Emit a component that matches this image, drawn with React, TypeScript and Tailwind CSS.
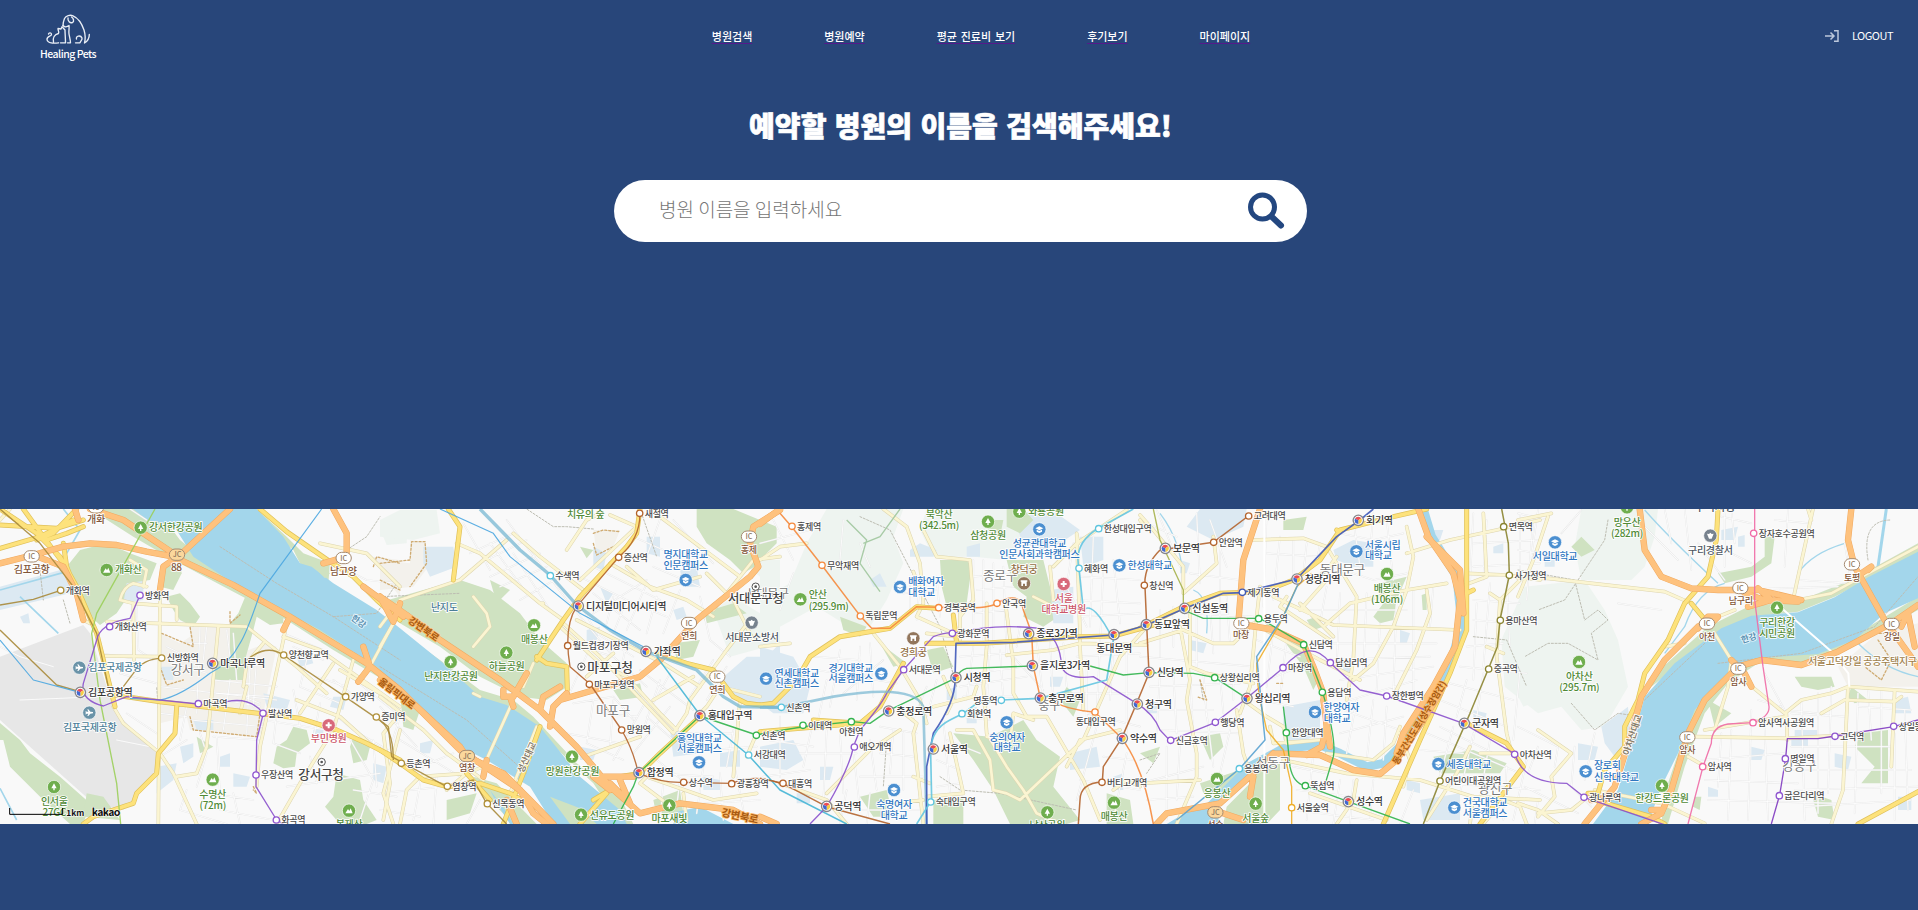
import React from "react";

type Tile = 0 | 1 | 2 | 3 | 4;
const ORIGIN = [0, 1140, 2280, 3420, 4554];

type Shape = [Tile, string];

const HILLS: Shape[] = [
  [2, "M200 27L430 27L400 110L430 190L380 300L330 380L250 370L170 320L60 380L0 400L0 300L90 250L140 130Z"],
  [2, "M500 27L780 27L800 120L740 180L640 170L520 170L480 90Z"],
  [1, "M1000 330L1060 290L1140 340L1140 230L1080 180L1200 180L1200 430L1050 470Z"],
  [3, "M1100 420L1160 400L1200 300L1200 600L1150 620L1110 540Z"],
  [4, "M190 27L420 27L410 110L380 200L340 240L190 240L170 140Z"],
  [4, "M20 260L200 240L260 330L300 420L330 560L260 680L190 690L130 620L60 640L-40 560L-50 420Z"],
  [0, "M1150 110L1180 80L1220 90L1220 130L1160 135Z"],
  [1, "M0 60L60 30L170 30L180 100L100 120L0 110Z"],
];

const PARKS: Shape[] = [
  [0, "M240 150L320 130L390 160L470 190L450 240L380 250L370 310L350 340L300 375L250 330L230 250L200 200Z"],
  [0, "M270 27L470 27L540 120L640 200L880 330L1200 530L1200 570L1000 450L860 360L690 270L520 180L400 110Z"],
  [0, "M500 290L540 280L570 310L600 350L580 380L540 360L520 330Z M740 280L800 290L850 340L850 370L810 375L770 350L760 390L735 480L730 540L640 540L640 490L690 470L690 370L715 340Z"],
  [0, "M480 200L540 190L545 220L520 270L480 260Z"],
  [0, "M-5 665L60 720L90 760L180 830L270 910L250 972L210 972L130 900L30 800L10 720L-5 720Z"],
  [0, "M880 680L920 690L930 730L890 760L885 800L850 805L820 790L830 740L860 720Z M1060 710L1110 740L1100 780L1060 790L1050 740Z M1010 820L1080 840L1090 900L1130 960L1100 972L1020 972L975 920L1000 890Z"],
  [0, "M770 27L860 110L910 160L990 190L985 250L1060 290L1190 380L1200 410L1090 340L1000 270L920 230L880 150L790 80Z"],
  [0, "M590 710L640 740L600 760Z M260 880L310 890L360 960L250 950Z"],
  [1, "M-10 310L130 270L240 240L330 270L420 340L480 420L560 490L562 560L500 600L420 590L300 530L180 440L60 370Z"],
  [1, "M60 395L180 480L300 570L400 600L460 650L590 790L720 890L760 972L720 972L640 850L470 690L300 590L100 440Z"],
  [1, "M60 580L120 630L100 690L70 680Z M330 240L390 270L350 310Z"],
  [1, "M950 27L1060 27L1140 60L1140 190L1090 220L1050 180L980 130L950 80Z M960 340L1060 310L1100 340L980 370Z M700 570L780 550L790 590L720 600Z M880 430L960 420L940 470L890 480Z"],
  [1, "M280 830L350 850L470 972L400 972L320 890Z M200 900L290 880L270 940L200 960Z M510 890L600 920L640 972L560 972Z M820 900L900 870L910 940L830 950Z M600 140L640 150L620 175Z"],
  [2, "M540 180L620 180L635 200L620 310L560 320L545 260Z M740 180L850 180L870 260L880 360L850 380L790 350L800 290L760 260Z M0 60L50 80L50 130L0 180Z M240 350L320 380L300 410L250 390Z M360 430L440 490L400 500Z"],
  [2, "M580 700L690 710L790 660L830 720L900 770L880 860L960 960L920 972L750 972L700 870L640 780Z M300 890L380 870L400 950L340 950Z M520 900L610 890L610 972L520 972Z M500 450L550 440L580 500L520 520Z"],
  [2, "M680 60L730 60L720 110L690 110Z M790 27L820 60L780 100L740 80L740 27Z M1040 880L1110 900L1120 972L1040 972Z M920 560L960 600L940 650L900 600Z"],
  [3, "M430 60L500 50L490 90L430 90Z M720 250L800 230L770 300L760 360L720 370L700 350L730 310Z M180 710L240 700L250 740L210 780Z M180 850L300 810L270 880L190 880Z"],
  [3, "M340 820L420 790L420 930L380 972L250 972L260 920L330 850Z M880 770L1000 750L1100 790L1080 820L900 820Z M500 360L530 350L550 380L520 390Z M370 365L500 440L540 530L520 570L490 500L430 420Z M0 760L60 740L40 790Z M845 285L860 280L860 330L848 330Z"],
  [4, "M160 140L190 110L230 150L190 170Z M600 220L700 200L740 170L740 110L770 110L760 190L700 230L620 250Z M570 380L690 320L850 300L1000 240L1200 130L1200 160L950 290L840 335L700 350L600 400L400 560L390 540Z"],
  [4, "M430 972L440 880L480 760L520 640L620 520L720 470L900 450L1020 400L1200 290L1200 330L1020 430L900 490L720 490L630 550L560 640L500 800L450 972Z M830 530L940 530L950 560L900 570L850 560Z M1000 560L1050 600L1010 610L990 590Z M1030 700L1110 690L1110 850L1030 850L1070 800L1010 740Z M880 880L940 900L950 960L900 950Z M530 890L550 890L545 930L525 920Z M570 600L640 640L590 680Z"],
];

const CAMPUS: Shape[] = [
  [0, "M0 260L200 205L210 280L0 330Z M470 800L530 790L520 840L470 880Z M790 580L870 600L860 630L800 620Z M890 470L930 460L940 490L900 500Z M1000 590L1040 590L1030 630L990 620Z M60 350L85 340L90 370L70 370Z M370 230L430 220L430 300L370 310Z"],
  [0, "M540 740L580 730L580 770L550 790Z M660 770L690 760L690 800L660 800Z M940 690L970 680L970 720L940 715Z M480 500L520 500L520 540L490 540Z M580 660L640 660L640 690L590 690Z M700 820L750 830L740 860L700 860Z M1120 790L1160 800L1150 850L1120 840Z"],
  [1, "M130 140L220 140L230 200L150 230L130 190Z M800 110L840 110L840 170L800 160Z M640 140L680 160L670 210L640 200Z M880 330L910 320L920 350L890 360Z M660 260L700 280L680 310Z M620 390L660 380L650 420L620 430Z M900 210L950 200L960 260L910 260Z"],
  [1, "M1020 540L1100 470L1160 470L1200 430L1200 610L1100 610L1050 580Z M870 690L950 700L960 760L880 770Z M1020 760L1080 750L1080 800L1020 800Z M600 740L650 750L640 780L600 780Z M970 830L1020 840L1020 870L970 870Z M120 730L160 720L150 760L120 760Z"],
  [2, "M0 440L100 470L150 560L130 640L40 640L0 610Z M0 740L100 720L130 780L80 810L0 800Z M760 60L820 27L890 40L960 90L900 130L850 150L790 130Z M960 110L1030 110L1030 180L970 200Z M870 270L940 260L940 370L880 370Z M620 140L660 130L660 170L620 170Z M870 530L910 530L900 560L870 560Z"],
  [2, "M180 800L220 800L210 840L180 840Z M450 150L480 130L530 150L520 170L450 170Z M930 760L1010 740L1020 800L930 810Z M560 570L590 560L590 600L560 600Z M1060 830L1090 820L1090 870L1060 870Z M110 880L150 880L150 910L110 910Z M330 240L360 220L380 260L340 260Z M620 630L650 620L650 670L620 670Z"],
  [3, "M180 27L320 27L310 80L220 120L140 80Z M580 150L640 120L700 130L700 200L640 200L590 180Z M430 620L540 600L540 700L480 730L430 720Z M840 900L960 880L960 960L850 960Z M120 180L150 190L140 220L120 220Z M860 90L910 90L900 120L860 120Z M1060 140L1090 130L1090 160L1060 160Z"],
  [3, "M150 420L200 430L190 460L150 450Z M610 480L640 480L640 520L610 520Z M780 390L810 400L800 430L780 430Z M1000 630L1040 640L1030 680L1000 680Z M740 240L770 240L770 270L740 270Z M800 840L840 850L840 880L800 870Z M20 600L60 610L50 640L20 640Z"],
  [4, "M250 680L330 620L340 740L290 770L260 730Z M80 150L110 160L110 200L80 200Z M610 90L660 80L650 120L610 120Z M660 110L680 105L680 140L660 140Z M1130 600L1170 590L1180 640L1130 640Z M820 710L870 710L870 740L820 740Z M570 860L600 870L600 890L570 890Z M700 740L740 750L730 780L700 780Z M950 760L1000 770L990 810L950 800Z M180 730L240 740L230 780L180 780Z M1140 890L1180 890L1180 930L1140 930Z M830 690L900 690L900 710L830 710Z"],
];

const WATER: Shape[] = [
  [0, "M400 27L770 27L850 110L900 190L935 200L1000 250L1130 330L1200 385L1330 490L1440 590L1520 615L1620 680L1740 830L1860 930L1880 972L1660 972L1590 860L1460 780L1380 740L1240 600L1130 500L960 390L700 250L580 170L520 75L440 60Z"],
  [1, "M880 972L890 935L960 920L1060 972Z M330 870L375 930L400 972L390 972L350 910Z"],
  [3, "M80 972L160 925L230 935L240 972Z"],
  [4, "M225 972L300 870L350 700L380 590L470 490L610 385L700 347L840 337L950 292L1050 232L1210 150L1210 290L1100 340L1010 420L900 462L710 475L620 530L530 630L480 760L430 860L390 972Z"],
];

const STREAMS: [Tile, number, string][] = [
  [3, 26, "M850 27L875 110L950 230L965 370L935 480L850 640L780 740L730 790L680 800L600 760L540 735L430 745L330 800L210 920L150 972"],
  [4, 9, "M1105 27L1080 200"],
  [0, 5, "M190 27L240 90L200 160M0 270L200 215M60 290L175 400M0 865L50 960"],
  [4, 4, "M980 130Q880 160 840 220M620 250Q540 270 500 380L440 460M380 30Q450 110 600 250M1020 430Q1100 510 1200 530"],
  [3, 4, "M60 40Q130 130 130 260M160 270Q210 290 200 400"],
];

const GREY_LAND: Shape[] = [
  [0, "M250 375L270 400L320 560L350 640L470 760L470 820L370 930L280 910L0 660L0 470Z"],
];
const BEIGE: Shape[] = [
  [0, "M570 375L690 380L690 470L800 430L830 440L790 640L790 700L760 710L570 690L560 650L480 670L480 400L540 430L570 410Z M1120 170L1200 180L1200 290L1160 240Z"],
  [1, "M0 180L90 190L90 120L135 125L145 200L100 260L0 270Z M640 90L720 90L700 140L650 160Z"],
  [4, "M1200 370L1200 560L990 560L960 500L1020 450L1080 400Z"],
];

const MINOR: Shape[] = [
  [0, "M360 520L470 550M480 560L830 600M480 600L560 620L540 720M600 380L590 640M620 380L610 480M680 390L690 470M560 430L620 430M640 540L830 560M650 580L820 590M690 540L670 690M750 500L740 700M770 470L760 620M570 660L790 680M480 640L560 650M380 640L470 700M350 720L450 740M600 700L620 760L590 860M480 770L560 720M640 710L780 720M650 710L660 880M790 660L980 690M830 640L820 730L900 760M880 570L900 680M920 480L900 560L1020 610M950 530L1040 560M960 610L940 720M1000 640L1060 690L1180 760M1040 700L1120 840L1080 960M1120 720L1130 860M860 860L1140 820M930 770L950 850M1060 870L1190 890M630 880L760 900M560 870L540 930L680 972M700 880L720 972M660 930L820 960M390 27L440 60M0 440L60 470L160 500M1000 190L1100 240L1190 250M410 310L415 450L460 480M300 460L400 475"],
  [0, "M500 440L560 470M500 480L620 520M700 400L710 540M730 590L780 610M670 600L780 620M60 600L300 590M850 400L970 450M880 440L970 480M1040 520L1190 640M1000 540L1080 600"],
  [1, "M380 60L470 180L560 300L700 470L800 560M250 70L330 210M330 130L440 280M400 160L510 330M270 160L400 100M300 190L440 120M330 230L480 160M360 260L500 200M420 300L540 230M600 230L740 300L860 350M640 200L840 300M600 310L650 400L760 470M640 280L780 390M700 290L680 370M740 300L700 400M800 250L740 390M830 290L800 400M640 340L800 240M850 30L800 170M880 60L1000 190M760 110L850 150M820 200L960 260M900 270L850 400M960 290L990 420L1050 470M600 440L700 470M640 420L560 600M740 430L720 520M580 610L700 590L760 660M640 600L620 730L730 780M660 640L770 650M560 700L720 730M700 600L690 740M740 540L880 690M780 510L940 630M800 600L700 780M840 540L790 690M870 620L760 760M800 650L880 720M820 820L1000 830M850 840L840 972M900 840L890 920M970 800L950 940M1020 820L1030 960M1060 780L1090 930M980 750L1130 740M830 780L920 850M820 920L1140 900M900 700L1060 700M1060 690L1040 800M1000 480L930 590M1040 500L980 600M870 520L820 610M0 620L110 740M60 650L20 780M60 720L240 830M100 810L220 760M130 800L100 960M170 830L160 972M0 880L190 860M0 930L120 950M300 900L260 972"],
  [2, "M40 60L100 180M0 130L150 90M100 220L60 330M250 60L240 180M300 130L330 200M450 230L450 340M480 240L470 360M530 230L540 350M430 280L530 270M640 180L640 370M670 180L670 420M700 190L700 440M730 200L740 470M640 230L780 220M650 270L760 260M640 340L740 330M780 380L770 440M830 420L850 600M870 420L880 610M910 430L920 560M640 440L620 600M690 440L680 620M720 450L730 600M760 470L850 570M600 470L740 460M600 560L800 530M610 590L760 590M640 520L870 490M940 130L920 260L980 380M960 230L1140 240M1000 110L990 380M1030 200L1020 430M1060 180L1080 370M950 300L1140 310M960 350L1140 340M950 470L1140 460M980 480L980 660M1020 440L1010 640M1060 450L1050 600M1100 430L1100 700M930 580L1140 580M980 640L1140 680M1010 680L950 900M1100 760L1060 960M960 840L1140 870M1030 770L1120 780"],
  [2, "M300 440L290 600M330 430L340 590M370 480L250 580M160 470L300 480M170 510L410 550M200 540L170 680M240 450L210 620M160 660L130 800M200 690L190 900M240 700L250 880M280 750L300 930M330 720L350 870M20 720L160 740M10 830L150 810M120 760L290 760M60 650L60 830M360 680L470 700M400 690L390 820M430 700L430 870M300 830L490 830M360 760L460 770M500 560L460 660M530 540L500 650M550 660L570 880M600 650L690 660M560 720L660 760M530 780L600 810M530 860L600 850M220 930L490 930M260 870L240 972M330 880L320 972"],
  [3, "M50 30L120 200M0 60L110 110M170 40L180 250M210 60L260 200M240 120L240 420M150 220L300 240M140 340L340 350M60 330L60 470M100 320L100 440M170 330L170 500M210 320L220 460M260 290L270 430M0 470L340 500M60 520L50 700M100 520L110 700M150 500L160 720M190 520L200 650M240 530L250 640M280 520L280 600M30 560L300 550M40 630L220 630M60 690L300 700M80 740L80 960M120 730L110 900M200 640L220 800M270 690L240 820M0 850L190 800M20 900L160 890M380 40L370 320M420 110L400 300M460 120L460 240M500 130L490 220M540 130L530 190M380 160L540 170M600 100L700 120L790 100M640 60L660 200M700 40L690 160M740 60L760 240M580 200L700 240L800 220M560 260L540 370M600 280L590 500M680 280L670 520M720 370L710 570M770 290L760 580M820 270L820 600M880 260L870 380M480 330L800 330M550 430L890 430M540 480L870 470M600 540L880 500M630 600L830 540"],
  [3, "M350 420L480 470M400 390L380 560M440 410L420 600M480 500L380 540M360 600L460 620M610 630L780 690M650 600L620 760M700 600L680 780M740 620L730 780M600 700L790 650M1000 40L990 250M1040 60L1030 240M1140 40L1140 230M1180 60L1160 300M1000 130L1200 120M1000 200L1200 190M1000 300L1140 310M1000 360L1120 370M980 440L1090 430M960 500L1160 520M930 550L1120 600M1010 310L1000 540M1050 250L1030 500M1100 240L1110 450M900 600L1100 680M980 540L950 650M1030 520L1000 720M1140 510L1120 720M900 680L1060 760M860 700L1140 820M840 750L970 760M940 680L880 900M1000 700L960 880M1050 720L1010 950M1160 780L1120 960M920 850L1200 870M820 870L780 972M700 840L690 960M600 840L580 972M640 840L630 972M470 870L720 900M460 930L700 960M520 760L500 960M1100 800L1090 960M460 800L560 820"],
  [4, "M0 40L90 60M60 30L30 240M130 100L190 30M0 150L60 160M440 27L460 130M500 27L520 210M540 130L620 240M610 50L700 70M620 150L700 190M640 27L650 130M770 60L880 70M810 30L800 200M840 240L1000 250L980 130M600 270L960 260M480 180L360 60M620 40L620 200M740 520L800 630L900 640M720 600L790 620M610 700L600 860M640 690L630 960M700 630L690 960M740 680L750 960M550 780L800 760M560 840L840 850M570 900L960 910M850 600L860 960M900 580L900 940M940 560L930 880M1050 560L1060 720M1090 570L1090 880M820 640L980 650M820 740L1120 740M810 810L1180 810M830 870L1200 860M860 920L1180 900M1130 700L1130 960M1160 630L1170 930M1020 580L1010 940M0 680L120 740L110 800M60 740L30 820M170 740L160 860L220 920M20 860L180 940M60 900L50 972M230 700L200 840M1020 620L1180 630M300 310L430 330"],
];

const CREAM: Shape[] = [
  [0, "M480 270L475 972M320 365L740 380L890 500L980 580M360 300L400 310L530 320L530 360M360 300Q370 260 400 250L440 260M390 180L440 210L430 260M400 310L402 480M310 468L480 470M655 380L630 640L620 740L590 820L530 830M740 560L720 640M790 430L740 490L730 560M860 370L850 420L820 560L780 740L770 860M850 410L960 450L1200 620M1000 490L900 640M1060 480L1000 690L900 850L830 972M890 600L1020 650L1120 740M340 620L370 670L480 760L520 820L590 972M1180 370L1110 500M1200 690L1150 880L1180 972M270 370L250 360M1200 260L1100 160L960 130M30 27L0 60M1020 510L1140 580"],
  [1, "M0 380L60 300L240 240L380 120M230 130L300 160L480 310L550 360M280 290L320 340L330 380L280 440M400 100L480 170L610 270M480 310L490 310M550 370L660 470L880 700M590 360L850 490L960 560M540 380L660 490L740 530L840 640L890 690M690 45L770 80L600 240M690 190L810 260L920 300L1000 350M660 40L620 60L560 150M840 50L1080 230M740 200L820 270L960 230M980 220L1060 300L1120 420M820 600L940 530M700 460L620 530M1110 360L1040 450L930 600L920 640L880 700M1140 590L1020 560L980 620L960 640M1200 170L1120 180L1000 330M40 370L0 440M460 490L430 560M400 600L310 800L260 820M470 680L390 880M610 770L780 710M0 590L130 690L200 760L310 840M60 640L10 700L30 850L10 960M200 870L260 820L120 830L80 870L60 972M280 580L300 590M800 830L1000 900L1130 880M910 880L920 960M1080 600L1060 830M1100 770L1130 700M820 810L780 850L860 910"],
  [2, "M0 180L60 140L140 130M0 440L90 430M370 27L440 80L480 190L490 310L470 350L580 400M490 90L530 170L630 180L640 300L600 350M600 340L600 420M735 300L760 490L760 580L800 650L860 650L970 840M460 215L480 270M500 400L590 410M680 310L680 440L670 560L680 700L740 800L790 870L830 940L900 972M340 400L420 500L480 600L500 670M420 630L470 670L460 700L480 880L490 972M740 465L880 450L960 430L1160 435M955 130L950 100L960 400L960 440M960 440L970 630M880 200L950 130L1100 30M870 200L880 300M820 290L880 320M1160 380L1080 470L1010 630L970 720L780 900M920 800L960 720L1080 690M550 530L580 600L560 640M590 690L640 690L690 780L700 870L740 880L780 900M650 560L640 590L520 620M570 700L610 880L500 890M680 710L750 730L760 640L820 660M60 850L200 900L260 972M420 690L330 750L200 880M460 830L510 850M400 910L490 900M970 840L1020 960M1060 870L1100 840L1140 860"],
  [3, "M0 45L40 90L130 200L130 280M130 280L230 190L220 110M340 120L490 115L560 140L650 290L640 480L620 600M360 260L350 350L330 560L300 640M150 320L150 500L200 520L340 550M0 430L130 390L220 430L280 430L340 370L540 480L660 540M400 290L530 350L580 375L960 390M480 310L580 410M440 290L420 320L570 420M550 380L630 310L800 270L920 250M520 240L560 210L590 170M560 240L480 330M800 160L930 120L1070 90L1200 60M800 80L820 170L800 270L760 380L700 490L640 540M860 270L870 340L830 450L760 590M120 380L150 540L140 600L170 760L170 830L110 972M290 630L310 760L330 820M310 600L380 650L430 680L440 730L540 720L400 730L390 680M560 760L700 780L760 730L780 680M430 780L620 820L840 840L1000 890L1200 900M980 220L1100 225L1200 240M1050 280L1080 300L1070 470L1100 700L1110 740M1140 240L1080 300M1040 440L1090 460M650 840L640 900L590 972M1110 760L1020 760M860 960L950 820L990 740M1000 890L990 972M780 700L810 780L790 860M0 60L20 90M1030 40L1040 230L960 260M180 840L0 850M510 880L740 960M1030 972L1090 900L1140 920L1160 972"],
  [4, "M90 50L50 170L0 290M0 235L90 235L440 275L520 310L560 360M590 400L640 480L630 560L590 690M690 550L800 640L850 600L940 580L990 560L1200 575M0 60L100 40M530 710L810 715L980 705M805 640L808 720M910 640L980 600L1130 605L1150 590M1130 570L1120 800M990 560L975 870L940 972M885 27L825 300M840 300L940 280L1050 220L1200 140M600 350L650 330M510 770L580 810M500 430L440 440M230 870L430 910L560 970M160 760L100 830L110 890L60 950M0 910L60 930L120 972M60 690L160 760M560 690L800 650M210 890L160 930L60 940M870 27L880 60"],
];

const YELLOW: Shape[] = [
  [0, "M0 27L110 100L180 170L230 260L290 400L330 560L345 620M345 585L480 605L900 655L1010 690L1100 730L1200 780M530 620L525 700L475 760L470 820L410 880L400 910L280 950L250 972M0 145L120 110L220 60M0 75L170 85L250 60M70 27L130 110L190 190M230 27L160 100L110 120M140 120L200 100L250 80M190 130L200 200L220 250M780 27L860 95L990 185L1060 230L1130 300L1200 360"],
  [1, "M205 27L240 80L220 240M470 470L500 490L560 500L562 570M780 27L770 100L740 140L600 290L550 360L470 480M0 750L60 790L130 840L200 860L300 850L390 880L480 930M830 460L920 490L1000 510L1060 590L1100 610L1140 615M680 880L600 972M640 900L690 870M260 820L330 900M480 680L430 820L370 972M720 830L780 820L840 760L960 650"],
  [2, "M0 615L40 610L110 540L150 470L240 410L390 385L470 320L530 325M580 345L590 430M500 430L670 430L960 410L1060 408L1200 370M420 510L430 490L360 620L300 670L0 695M160 660L300 670"],
  [3, "M0 385L130 320L240 280L370 275L460 240L540 180L600 90L760 50L860 27M600 95L590 90M980 27L980 390L930 520L840 720L730 972M980 670L1100 730L1150 800L1020 972M980 280L1000 270"],
  [4, "M600 27L595 120L570 230L500 310L450 420L380 520L360 600L320 680L320 740L260 810L240 880L210 880M520 310L570 370M230 900L400 950L440 972M1200 875L1020 972"],
];

const ORANGE: Shape[] = [
  [0, "M0 190L100 165L190 140L270 130L350 135L440 155L520 170L700 255L870 350L1100 490L1200 570L1380 750L1560 870L1600 940L1640 972M690 27L540 165L490 200L480 270M100 165L190 200L230 280L250 360M270 27L370 60L520 160M1000 27L1040 100L1040 170L970 190M870 350L850 390M1090 440L1110 500L1075 545M1090 260L1200 340M1200 310L1180 365L1140 290M225 27L235 60"],
  [1, "M0 290L80 345L180 420L360 540L480 630L590 740L690 860L780 940L900 910L1060 930L1140 972M540 600L780 530L840 480L950 360L1110 230L1135 200L1110 130L1120 80L1200 30M480 630L490 590L540 560M510 680L520 620L560 580M440 520L400 590L370 590L370 570M390 590L400 620M690 870L640 830L760 830M0 540L110 620L240 740L260 770L370 820L450 900L520 972M310 830L320 780M380 900L410 972M720 840L750 910L690 850M20 310L70 350"],
  [2, "M0 72L60 27M0 950L50 972"],
  [3, "M360 27L310 180L295 370L400 390L490 430L520 500L550 580L560 680L545 740L500 765M330 378L400 388M550 600L570 740M835 27L865 110L940 220L960 300L945 440L880 560L790 700L770 760M860 110L960 210L970 340M400 760L540 765L640 810L720 822L770 780L850 660L900 580M400 760L340 820L240 910L80 940L50 972M340 830L330 890M220 930L310 960"],
  [4, "M365 27L380 150L430 230L520 265L600 270L720 270L850 300M680 280L740 300L840 305M1000 27L990 120L1010 200L1100 360L1200 500M690 320L760 300L720 265M540 385L570 350L600 350L580 370M540 380L440 480L370 590L340 700L290 860L200 972M640 480L660 500L730 480L850 495L960 455L1120 370L1200 315M660 500L560 600L510 700L460 870L430 940L370 972M680 520L700 560M1150 380L1170 340L1190 440M1030 220L1060 200L1050 210M430 930L400 930M220 900L290 890"],
];

const RAIL: [Tile, string, number, string][] = [
  [0, "#a98a3a", 4, "M0 315L100 298L180 272M0 27L120 130L220 260L290 400L325 560M0 390L170 555L240 575M370 560L400 520Q430 475 485 475M740 480Q800 430 850 465L1035 590L1130 655Q1180 680 1180 780"],
  [0, "#9bcf5a", 4, "M465 27L290 340L275 400L300 600L350 850L362 972"],
  [0, "#4aa6e0", 3.5, "M965 27L780 280Q740 400 720 430Q690 490 630 520Q540 590 480 600L390 595M0 420L100 540L240 577"],
  [0, "#8a50cc", 4, "M420 285L390 355Q300 370 290 420L250 550Q240 600 310 618L380 590L595 612M680 605Q750 590 790 640L770 720L768 860L830 960L850 972"],
  [1, "#6fb3d0", 10, "M300 27L420 150L510 225L590 315L690 390L800 455L950 510L1030 590L1080 620L1200 622"],
  [1, "#4aa6e0", 3.5, "M180 27L340 100L390 170L600 340L790 440"],
  [1, "#b3632c", 4, "M780 40Q780 120 715 172L590 320Q550 380 570 500L630 552L725 690Q760 750 775 820Q850 850 910 847L1055 850Q1130 820 1200 850"],
  [1, "#2fb24a", 4, "M700 972L760 860L775 820L960 648L1130 705Q1200 690 1290 678L1415 665L1470 670L1525 632L1725 535Q1740 510 1760 505L1955 498"],
  [1, "#45b5d5", 4.5, "M830 470L960 645L1105 765L1200 870L1400 972"],
  [1, "#a98a3a", 4, "M0 660L25 680L35 770L200 860L280 840L320 910L380 972"],
  [2, "#f5893c", 4.5, "M60 40L95 80L185 195L300 347L335 385L390 385L470 320L535 322Q680 330 710 310Q780 270 790 330L815 400L820 500L840 590Q920 630 1005 637L1085 715Q1150 800 1180 972"],
  [2, "#8a50cc", 4, "M150 972L200 920Q270 800 280 740L300 690Q360 620 380 580L430 510L520 410Q560 395 580 400Q700 370 840 385Q900 410 905 500Q920 540 1000 530L1130 610Q1180 640 1200 690L1230 722L1365 668L1460 595L1570 503Q1650 410 1710 488L1800 570L1880 588L2110 670L2265 762Q2290 850 2420 850L2475 893L2760 990"],
  [2, "#76b6d2", 8, "M0 622L64 622L220 590Q460 550 490 620L500 972"],
  [2, "#3f58b8", 5, "M500 972L500 800L520 700Q590 600 585 530L588 430L760 427L1060 405L1160 375L1275 325L1390 280L1445 278L1610 237L1730 110L1800 60L1840 27"],
  [2, "#64c5e0", 5, "M470 972L515 900L512 760Q510 690 570 660L610 640L650 610L725 600L840 595L1040 540L1060 420Q1000 300 970 330L957 205Q940 130 1015 85L1120 27"],
  [2, "#2fb24a", 4, "M990 498L1090 525L1167 518L1300 520L1365 533L1460 595M1270 330L1330 355L1500 355L1632 433L1688 577Q1730 720 1720 770L1690 870M1570 620L1580 700L1590 800Q1600 850 1635 857L1765 905L1950 972"],
  [2, "#b3632c", 4.5, "M200 920L390 972M0 835L68 850L200 920M1200 150L1360 127L1465 48M1200 150Q1150 200 1155 260L1160 375L1167 520L1130 610L1085 715L1030 800L1027 845Q960 850 960 900L955 972"],
  [3, "#efae28", 4, "M515 220L470 260L420 370L350 490Q350 540 360 600L380 690L430 750L455 860L455 972"],
  [3, "#5aa2d0", 4.5, "M480 240L430 350L350 470L365 620L375 720L300 805L110 960"],
  [3, "#8b8430", 4.5, "M1085 27L1105 130L1108 225L1080 360L1072 440L1045 507L990 640L900 843L850 972"],
  [3, "#a6b14a", 4, "M40 27L60 120L130 270L130 330"],
  [4, "#ef6aa5", 4, "M710 27L710 300L735 500L753 620Q755 650 705 668L630 672Q580 680 580 730L555 800L510 972"],
  [4, "#8038c0", 4, "M760 972L785 885L803 775L808 716L900 716L952 708L1127 680L1200 660"],
];

const DASHED: Shape[] = [
  [0, "M660 140L830 250L1000 350L1200 480M1000 350L1130 340L1190 250M190 300L210 370M120 210L130 300M1040 150L1100 110L1140 50M480 690L470 560"],
  [1, "M0 500L260 660L440 820M640 87L560 80L520 80L440 27M0 290L240 280M780 27L830 170"],
  [2, "M300 50L390 90L540 380L590 560M540 830L600 870L720 880L950 930M380 720L370 860"],
  [4, "M0 210L170 240L200 360L240 330L270 360L220 400L240 480L150 430L90 430L20 470M160 610L230 690L300 640L370 650M270 60L260 120L180 240L140 300L60 330M1050 180Q1030 60 1120 60M600 490L850 460L1070 380L1200 230M380 600L560 430"],
  [3, "M1000 410L1100 420L1160 560M0 780L60 760L20 820M180 540L190 600"],
];
const TAN_DASHED: Shape[] = [
  [0, "M485 400L580 440L570 380M480 500L500 555L550 540M690 335L690 370L720 345M570 650L580 690L770 710L780 640M1120 200L1130 170L1200 190M1200 270L1140 240M760 860L770 880L760 870"],
  [1, "M0 190L90 180L95 125L135 125L140 190L90 260M640 100L670 90L720 95M640 130L650 165L700 140"],
  [3, "M180 540L200 600L170 590M410 550L430 550"],
  [4, "M1080 420L1120 480L1090 540L1040 500M1060 400L1100 400"],
];

type Stop = [Tile, number, number, string, string, number?, number?];
const BRN = "#b3632c", GLD = "#b09038", PUR = "#8f55cf", GRN = "#33b34c", SKY = "#5cc4de", ORG = "#f5893c", OLV = "#8b8430", PNK = "#f06ba7";
const STOPS: Stop[] = [
  [0, 182, 271, "개화역", GLD], [0, 420, 286, "방화역", PUR], [0, 329, 380, "개화산역", PUR], [0, 485, 474, "신방화역", GLD],
  [0, 595, 611, "마곡역", PUR], [0, 789, 640, "발산역", PUR], [0, 851, 465, "양천향교역", GLD], [0, 1037, 590, "가양역", GLD],
  [0, 768, 825, "우장산역", PUR], [0, 829, 960, "화곡역", PUR], [0, 1129, 651, "증미역", GLD],
  [1, 64, 790, "등촌역", GLD], [1, 202, 859, "염창역", GLD], [1, 322, 911, "신목동역", GLD], [1, 779, 40, "새절역", BRN],
  [1, 716, 172, "증산역", BRN], [1, 511, 227, "수색역", SKY], [1, 563, 437, "월드컵경기장역", BRN], [1, 628, 553, "마포구청역", BRN],
  [1, 725, 690, "망원역", BRN], [1, 911, 847, "상수역", BRN], [1, 1055, 851, "광흥창역", BRN], [1, 1129, 706, "신촌역", GRN], [1, 1106, 765, "서강대역", SKY],
  [2, 96, 79, "홍제역", ORG], [2, 186, 196, "무악재역", ORG], [2, 301, 348, "독립문역", ORG], [2, 536, 323, "경복궁역", ORG],
  [2, 711, 310, "안국역", ORG], [2, 577, 400, "광화문역", PUR], [2, 431, 509, "서대문역", PUR], [2, 64, 622, "신촌역", SKY],
  [2, 129, 676, "이대역", GRN], [2, 274, 665, "아현역", GRN, -36, 31], [2, 283, 741, "애오개역", PUR], [2, 69, 850, "대흥역", BRN],
  [2, 606, 641, "회현역", SKY], [2, 724, 601, "명동역", SKY, -84, 0], [2, 512, 906, "숙대입구역", SKY], [2, 1005, 636, "동대입구역", ORG, -58, 29],
  [2, 1026, 847, "버티고개역", BRN], [2, 957, 205, "혜화역", SKY], [2, 1016, 86, "한성대입구역", SKY],
  [3, 326, 48, "고려대역", BRN], [3, 221, 127, "안암역", BRN], [3, 13, 256, "창신역", BRN], [3, 307, 277, "제기동역", "#3f58b8"],
  [3, 356, 356, "용두역", GRN], [3, 491, 434, "신답역", GRN], [3, 571, 488, "답십리역", PUR], [3, 429, 503, "마장역", PUR],
  [3, 224, 533, "상왕십리역", GRN], [3, 226, 667, "행당역", PUR], [3, 92, 721, "신금호역", PUR], [3, 547, 577, "용답역", GRN],
  [3, 740, 588, "장한평역", PUR], [3, 439, 698, "한양대역", GRN], [3, 298, 806, "응봉역", SKY], [3, 496, 857, "뚝섬역", GRN],
  [3, 455, 923, "서울숲역", "#efae28"], [3, 1091, 80, "면목역", OLV], [3, 1108, 226, "사가정역", OLV], [3, 1081, 361, "용마산역", OLV],
  [3, 1046, 507, "중곡역", OLV], [3, 900, 843, "어린이대공원역", OLV], [3, 1124, 763, "아차산역", PUR],
  [4, 198, 892, "광나루역", PUR], [4, 707, 100, "장자호수공원역", PNK], [4, 705, 668, "암사역사공원역", PNK], [4, 554, 800, "암사역", PNK],
  [4, 951, 709, "고덕역", PUR], [4, 802, 776, "명일역", PUR], [4, 784, 887, "굽은다리역", PUR], [4, 1127, 679, "상일동역", PUR],
];

const HUBS: [Tile, number, number, string, number?, number?][] = [
  [0, 638, 490, "마곡나루역"], [0, 241, 577, "김포공항역"], [1, 595, 318, "디지털미디어시티역"], [1, 798, 454, "가좌역"],
  [1, 960, 647, "홍대입구역"], [1, 777, 818, "합정역"], [2, 588, 533, "시청역"], [2, 386, 633, "충정로역"], [2, 520, 747, "서울역"],
  [2, 200, 919, "공덕역"], [2, 806, 401, "종로3가역"], [2, 817, 497, "을지로3가역"], [2, 841, 594, "충무로역"],
  [2, 1062, 404, "동대문역", -53, 41], [2, 1159, 374, "동묘앞역"], [2, 1167, 517, "신당역"], [2, 1132, 612, "청구역"], [2, 1087, 715, "약수역"],
  [3, 76, 145, "보문역"], [3, 134, 325, "신설동역"], [3, 471, 237, "청량리역"], [3, 655, 61, "회기역"], [3, 321, 595, "왕십리역"],
  [3, 625, 905, "성수역"], [3, 973, 670, "군자역"],
];

type Icon = "tree" | "peak" | "cap" | "plane" | "cross" | "palace" | "badge";
const ICON_FILL: Record<Icon, string> = { tree: "#6fae4e", peak: "#6fae4e", cap: "#4b8fd0", plane: "#6a93a8", cross: "#d8697a", palace: "#92765c", badge: "#77828e" };
const ICON_PATH: Record<Icon, string> = {
  tree: "M0 -11L8 4H2V10H-2V4H-8Z",
  peak: "M-11 8L-3 -5L1 1L5 -7L11 8Z",
  cap: "M0 -9L12 -3L0 3L-12 -3ZM-8 1V7L0 11L8 7V1L0 5Z",
  plane: "M11 -2V2L3 3L-3 10H-6L-3 3L-8 3L-11 6L-11 -6L-8 -3L-3 -3L-6 -10H-3L3 -3Z",
  cross: "M-3 -9H3V-3H9V3H3V9H-3V3H-9V-3H-3Z",
  palace: "M-10 -9H10V-5H8V8H3V1H-3V8H-8V-5H-10Z",
  badge: "M-10 -6L-4 -5L0 -9L4 -5L10 -6L7 2L4 9H-4L-7 2Z",
};
const GT = "#4f8a36", BT = "#2f76bf", ST = "#4b7d97", PT = "#cc5668", WT = "#927045", NT = "#4d5661";
const POIS: [Tile, Icon, number, number][] = [
  [0, "tree", 422, 83], [0, "peak", 320, 210], [0, "plane", 238, 503], [0, "plane", 268, 638], [0, "cross", 986, 676], [0, "peak", 638, 839],
  [0, "peak", 1047, 932], [0, "tree", 162, 861], [1, "peak", 462, 376], [1, "tree", 379, 458], [1, "tree", 212, 486], [1, "cap", 917, 240],
  [1, "badge", 1115, 368], [1, "tree", 576, 770], [1, "tree", 603, 944], [1, "tree", 868, 916], [1, "cap", 957, 787], [2, "cap", 18, 536],
  [2, "peak", 121, 298], [2, "cap", 420, 261], [2, "tree", 684, 65], [2, "tree", 778, 35], [2, "cap", 838, 88], [2, "palace", 792, 250],
  [2, "cross", 911, 252], [2, "cap", 1078, 196], [2, "palace", 460, 415], [2, "cap", 364, 521], [2, "cap", 740, 667], [2, "cap", 402, 870],
  [2, "tree", 862, 937], [2, "peak", 1062, 908], [3, "cap", 649, 154], [3, "peak", 741, 222], [3, "cap", 525, 636], [3, "peak", 231, 837],
  [3, "tree", 347, 911], [3, "cap", 895, 792], [3, "cap", 943, 923], [4, "tree", 327, 22], [4, "cap", 111, 127], [4, "badge", 577, 107],
  [4, "peak", 183, 486], [4, "tree", 777, 323], [4, "tree", 432, 857], [4, "cap", 203, 814],
];

type Label = [Tile, number, number, string, string, number?];
const LABELS: Label[] = [
  [0, 527, 83, "강서한강공원", GT], [0, 385, 209, "개화산", GT], [0, 345, 502, "김포국제공항", ST], [0, 269, 682, "김포국제공항", ST],
  [0, 986, 716, "부민병원", PT], [0, 638, 882, "수명산", GT], [0, 638, 917, "(72m)", GT], [0, 163, 905, "인서울", GT], [0, 163, 937, "27GC", GT],
  [0, 1047, 974, "봉제산", GT], [1, 617, 42, "치유의 숲", GT], [1, 193, 322, "난지도", ST], [1, 463, 419, "매봉산", GT], [1, 380, 498, "하늘공원", GT],
  [1, 213, 528, "난지한강공원", GT], [1, 577, 814, "망원한강공원", GT], [1, 696, 946, "선유도공원", GT], [1, 868, 956, "마포새빛", GT],
  [1, 917, 164, "명지대학교", BT], [1, 917, 195, "인문캠퍼스", BT], [1, 1116, 411, "서대문소방서", NT], [1, 958, 714, "홍익대학교", BT], [1, 958, 745, "서울캠퍼스", BT],
  [2, 110, 520, "연세대학교", BT], [2, 110, 550, "신촌캠퍼스", BT], [2, 173, 282, "안산", GT], [2, 206, 318, "(295.9m)", GT], [2, 537, 42, "북악산", GT], [2, 537, 76, "(342.5m)", GT],
  [2, 684, 107, "삼청공원", GT], [2, 858, 35, "와룡공원", GT], [2, 838, 131, "성균관대학교", BT], [2, 838, 164, "인문사회과학캠퍼스", BT], [2, 792, 209, "창덕궁", WT],
  [2, 911, 296, "서울", PT], [2, 911, 328, "대학교병원", PT], [2, 1169, 196, "한성대학교", BT], [2, 498, 245, "배화여자", BT], [2, 485, 276, "대학교", BT],
  [2, 460, 457, "경희궁", WT], [2, 272, 505, "경기대학교", BT], [2, 272, 535, "서울캠퍼스", BT], [2, 741, 712, "숭의여자", BT], [2, 741, 743, "대학교", BT],
  [2, 402, 913, "숙명여자", BT], [2, 402, 945, "대학교", BT], [2, 862, 977, "남산공원", GT], [2, 1062, 950, "매봉산", GT],
  [3, 728, 137, "서울시립", BT], [3, 715, 167, "대학교", BT], [3, 741, 265, "배봉산", GT], [3, 741, 299, "(106m)", GT], [3, 604, 622, "한양여자", BT], [3, 591, 654, "대학교", BT],
  [3, 231, 879, "응봉산", GT], [3, 347, 954, "서울숲", GT], [3, 986, 792, "세종대학교", BT], [3, 1035, 908, "건국대학교", BT], [3, 1035, 941, "서울캠퍼스", BT],
  [4, 327, 67, "망우산", GT], [4, 327, 100, "(282m)", GT], [4, 111, 168, "서일대학교", BT], [4, 577, 150, "구리경찰서", NT], [4, 590, 20, "구리시청", NT, 34],
  [4, 184, 529, "아차산", GT], [4, 184, 562, "(295.7m)", GT], [4, 777, 367, "구리한강", GT], [4, 777, 399, "시민공원", GT], [4, 432, 896, "한강드론공원", GT],
  [4, 268, 797, "장로회", BT], [4, 295, 831, "신학대학교", BT], [4, 1033, 485, "서울고덕강일 공공주택지구", "#a0814b"],
  [0, 288, 57, "개화", "#7f5538"], [0, 95, 207, "김포공항", "#7f5538"], [0, 529, 203, "88", "#7f5538"], [0, 1030, 214, "남고양", "#7f5538"],
  [1, 1106, 149, "홍제", "#7f5538", 27], [1, 927, 407, "연희", "#7f5538", 27], [1, 1012, 568, "연희", "#7f5538", 27], [1, 261, 804, "염창", "#7f5538", 27],
  [3, 303, 405, "마장", "#7f5538", 27], [3, 226, 975, "성수", "#7f5538", 27], [4, 567, 409, "아천", "#7f5538", 27], [4, 661, 544, "암사", "#7f5538", 27],
  [4, 508, 749, "암사", "#7f5538", 27], [4, 668, 302, "남구리", "#7f5538", 27], [4, 1002, 233, "토평", "#7f5538", 27], [4, 1121, 409, "강일", "#7f5538", 27],
  [0, 963, 822, "강서구청", "#444", 38], [1, 690, 501, "마포구청", "#444", 38], [1, 1127, 297, "서대문구청", "#444", 37],
];
const DISTRICTS: Label[] = [
  [0, 563, 508, "강서구", "#777", 38], [1, 699, 630, "마포구", "#777", 38], [2, 720, 227, "종로구", "#777", 38], [2, 868, 618, "중구", "#777", 36],
  [3, 607, 208, "동대문구", "#777", 38], [3, 399, 786, "성동구", "#777", 38], [3, 1066, 865, "광진구", "#777", 38], [4, 844, 796, "강동구", "#777", 38],
  [2, 22, 282, "서대문구", "#777", 36],
];
const JUNCTIONS: [Tile, number, number, string][] = [
  [0, 288, 22, "IC"], [0, 95, 169, "IC"], [0, 531, 164, "JC"], [0, 1031, 174, "IC"], [1, 1107, 110, "IC"], [1, 927, 369, "IC"], [1, 1012, 530, "IC"], [1, 261, 768, "JC"],
  [3, 304, 370, "IC"], [3, 226, 937, "JC"], [4, 667, 264, "IC"], [4, 567, 371, "IC"], [4, 661, 506, "IC"], [4, 508, 712, "IC"], [4, 1002, 193, "IC"], [4, 1121, 372, "IC"],
];
const ROAD_NAMES: [Tile, number, number, number, string, string, string, number][] = [
  [1, 131, 387, 35, "강변북로", "#a85a10", "#fbb868", 29], [1, 50, 580, 38, "올림픽대로", "#a85a10", "#fbb868", 29], [1, 1080, 948, 12, "강변북로", "#a85a10", "#fbb868", 31],
  [1, 440, 772, -66, "성산대교", "#8a7f6c", "#fff", 27], [0, 1076, 364, 35, "한강", "#5b92b3", "#e8f6fc", 26], [4, 692, 414, -18, "한강", "#5b92b3", "#e8f6fc", 26],
  [3, 838, 668, -59, "동부간선도로(성수장암간)", "#a85a10", "#fbb868", 27], [4, 343, 705, -72, "아차산대교", "#8a7f6c", "#fff", 28],
];

const at = (t: Tile) => `translate(${ORIGIN[t]} 0)`;

function Areas({ items, fill }: { items: Shape[]; fill: string }) {
  return <g fill={fill}>{items.map(([t, d], i) => <path key={i} transform={at(t)} d={d} />)}</g>;
}

function Lines({ items, color, width, dash }: { items: Shape[]; color: string; width: number; dash?: string }) {
  return (
    <g fill="none" stroke={color} strokeWidth={width} strokeLinejoin="round" strokeLinecap="round" strokeDasharray={dash}>
      {items.map(([t, d], i) => <path key={i} transform={at(t)} d={d} />)}
    </g>
  );
}

function Name({ t, x, y, text, color, size = 30, anchor = "middle", weight = 500 }: { t: Tile; x: number; y: number; text: string; color: string; size?: number; anchor?: "start" | "middle"; weight?: number }) {
  return (
    <text x={ORIGIN[t] + x} y={y + size * 0.36} fontSize={size} fontWeight={weight} fill={color} stroke="#fff" strokeWidth={5} strokeLinejoin="round" paintOrder="stroke" textAnchor={anchor} letterSpacing={-0.9}>
      {text}
    </text>
  );
}

function CityMap() {
  return (
    <svg viewBox="0 27 5754 945" className="block h-[315px] w-full bg-[#f9f9f9] font-['Noto_Sans_CJK_KR','Noto_Sans',sans-serif]">
      <Areas items={HILLS} fill="#eef4f0" />
      <Areas items={GREY_LAND} fill="#e7e7e7" />
      <Areas items={BEIGE} fill="#f3f1ec" />
      <Areas items={CAMPUS} fill="#dce9f2" />
      <Areas items={PARKS} fill="#cfe2c1" />
      <Areas items={WATER} fill="#a3d6eb" />
      <path fill="#cfe2c1" d="M1650 890L1740 925L1790 972L1710 972Z M930 190L990 220L975 235Z" />
      {STREAMS.map(([t, w, d], i) => <path key={i} transform={at(t)} d={d} fill="none" stroke="#a3d6eb" strokeWidth={w} strokeLinejoin="round" />)}
      <Lines items={MINOR} color="#e6e6e6" width={5} />
      <Lines items={MINOR} color="#ffffff" width={2.5} />
      <Lines items={DASHED} color="#bdbdb2" width={3} dash="6 5" />
      <Lines items={TAN_DASHED} color="#cfab72" width={4} dash="6 6" />
      <Lines items={CREAM} color="#ddd5b0" width={11} />
      <Lines items={CREAM} color="#fbf5d2" width={8} />
      <path d="M5345 325L5495 455L5545 520L5548 560M3793 27V972" fill="none" stroke="#fff" strokeWidth={6} />
      <Lines items={YELLOW} color="#dfc05a" width={15} />
      <Lines items={YELLOW} color="#fde27c" width={11} />
      <Lines items={ORANGE} color="#f0a960" width={19} />
      <Lines items={ORANGE} color="#fec27e" width={16} />
      <path d="M2540 60L2600 120L2580 190L2640 275M2700 27L2640 110L2590 130" fill="none" stroke="#a8cba6" strokeWidth={4} />
      {RAIL.map(([t, c, w, d], i) => <path key={i} transform={at(t)} d={d} fill="none" stroke={c} strokeWidth={w} strokeOpacity={w > 7 ? 0.7 : 0.9} strokeLinejoin="round" />)}

      {ROAD_NAMES.map(([t, x, y, r, s, c, halo, size], i) => (
        <text key={i} transform={`translate(${ORIGIN[t] + x} ${y}) rotate(${r})`} y={size * 0.36} textAnchor="middle" fontSize={size} fontWeight={600} fill={c} stroke={halo} strokeWidth={5} strokeLinejoin="round" paintOrder="stroke" letterSpacing={-0.6}>{s}</text>
      ))}
      {DISTRICTS.map(([t, x, y, s, c, z], i) => <Name key={i} t={t} x={x} y={y} text={s} color={c} size={z} weight={400} />)}
      {JUNCTIONS.map(([t, x, y, s], i) => (
        <g key={i} transform={`translate(${ORIGIN[t] + x} ${y})`}>
          <rect x={-23} y={-17} width={46} height={34} rx={17} fill={s === "JC" ? "#fbd79c" : "#fff"} stroke="#a68c72" strokeWidth={3} />
          <text y={8} textAnchor="middle" fontSize={22} fontWeight={500} fill="#8d7760">{s}</text>
        </g>
      ))}
      {STOPS.map(([t, x, y, s, c, dx = 15, dy = 0], i) => (
        <g key={i}>
          <circle cx={ORIGIN[t] + x} cy={y} r={9.5} fill="#fff" stroke={c} strokeWidth={4} />
          <Name t={t} x={x + dx} y={y + dy} text={s} color="#4a4a4a" size={27} anchor="start" />
        </g>
      ))}
      {HUBS.map(([t, x, y, s, dx = 23, dy = 0], i) => (
        <g key={i}>
          <g transform={`translate(${ORIGIN[t] + x} ${y})`}>
            <circle r={15.5} fill="#fff" stroke="#85858b" strokeWidth={4} />
            <path d="M-10 -5A11 11 0 0 1 9 -6L0 0Z" fill="#ea4c55" />
            <path d="M9 -6A11 11 0 0 1 0 11L0 0Z" fill="#f8cf45" />
            <path d="M0 11A11 11 0 0 1 -10 -5L0 0Z" fill="#4268cf" />
          </g>
          <Name t={t} x={x + dx} y={y + dy} text={s} color="#333" size={30} anchor="start" />
        </g>
      ))}
      {POIS.map(([t, k, x, y], i) => (
        <g key={i} transform={`translate(${ORIGIN[t] + x} ${y})`}>
          <circle r={20} fill={ICON_FILL[k]} stroke="#fff" strokeWidth={2} />
          <path d={ICON_PATH[k]} fill="#fff" />
        </g>
      ))}
      {LABELS.map(([t, x, y, s, c, z], i) => <Name key={i} t={t} x={x} y={y} text={s} color={c} size={z} />)}
      {[[965, 786], [1744, 500], [2267, 260]].map(([x, y]) => (
        <g key={x} transform={`translate(${x} ${y})`}>
          <circle r={11} fill="#fff" stroke="#555" strokeWidth={3} />
          <circle r={4} fill="#555" />
        </g>
      ))}

      <path d="M29 924V943H188V924" fill="none" stroke="#000" strokeWidth={3} />
      <text x={199} y={948} fontSize={25} fontWeight={700} fill="#111" stroke="#fff" strokeWidth={3} paintOrder="stroke">1km</text>
      <text x={275} y={947} fontSize={32} fontWeight={700} fill="#111" stroke="#fff" strokeWidth={3} paintOrder="stroke" textLength={86}>kakao</text>
    </svg>
  );
}

function PetsLogo() {
  return (
    <svg viewBox="0 0 44 31" className="h-[31px] w-11" fill="none" stroke="#e9eef6" strokeWidth="1.35" strokeLinecap="round" strokeLinejoin="round">
      <path d="M17 11.500C17 9 17.500 7 18.500 4.500C20 1.500 24 0.600 27 1.800C32 4 36 10 38 16C39.500 21 39.500 25 38.500 29C42 27 43.300 24 43.300 20.500" />
      <path d="M22 4C21.500 7 24 9.500 26.500 8.500C28.500 7.500 27.500 4 25.500 3" />
      <path d="M17 11.500C18.500 13.500 21 13 23 11.500C23.500 14 22.500 17 23 20C23.500 23 24.500 26 24.500 28.800H21.500" />
      <path d="M14.500 28.800H19.500C19.500 24.500 19 19.500 19 16L16 12.800L15 15L12 14.500C11.800 17 13.500 17.500 12.500 19.500C8.500 20.500 6.500 24 7.500 28.300" />
      <path d="M12.500 28.800C8 29.500 1.500 29.500 1 25.500C0.800 22 5.500 22.500 5.500 20.500C5.500 18.500 3 18.300 2.500 20" />
      <path d="M30.500 25C29.500 22 34.500 20.500 36 24C36.500 26 34.500 27 34 28.800H29.500" />
    </svg>
  );
}

const NAV = ["병원검색", "병원예약", "평균 진료비 보기", "후기보기", "마이페이지"];

export default function App() {
  return (
    <div className="flex h-[910px] w-full flex-col overflow-hidden bg-[#28467a] font-['Noto_Sans_CJK_KR','Noto_Sans',sans-serif] text-white">
      <header className="grid h-[72px] shrink-0 grid-cols-[1fr_auto_1fr] items-center">
        <div className="ml-[39px] flex w-[58px] flex-col items-center justify-self-start pt-[2px]">
          <PetsLogo />
          <span className="mt-px text-[10.500px] leading-[15px] font-medium tracking-[-0.500px] whitespace-nowrap">Healing Pets</span>
        </div>
        <nav className="flex gap-[72px] pl-[44px]">
          {NAV.map((item) => (
            <a key={item} href="#" className="text-[11px] leading-4 font-medium whitespace-nowrap underline decoration-[#551a8b] decoration-1 underline-offset-[2px] [word-spacing:1.3px]">
              {item}
            </a>
          ))}
        </nav>
        <div className="flex items-center gap-[13px] justify-self-end pr-[25px]">
          <svg viewBox="0 0 14 12" className="h-3 w-3.5" fill="none" stroke="#bcc8dc" strokeWidth="1.500">
            <path d="M0 6H9M5.500 2.500L9 6L5.500 9.500M9 0.800H13V11.200H9" />
          </svg>
          <a href="#" className="pb-[3px] text-[11px] leading-4 tracking-[-0.500px]">LOGOUT</a>
        </div>
      </header>

      <main className="flex flex-1 flex-col">
        <section className="flex h-[437px] flex-col items-center pl-[3px]">
          <h1 className="mt-[33px] text-[28px] leading-10 font-black whitespace-nowrap [-webkit-text-stroke:0.7px_white] [word-spacing:2px]">예약할 병원의 이름을 검색해주세요!</h1>
          <form className="mt-[35px] flex h-[62px] w-[693px] items-center rounded-[31px] bg-white pr-[22px] pl-[45px]">
            <input
              className="min-w-0 flex-1 bg-transparent pb-[3px] text-[19px] font-light text-gray-800 outline-none placeholder:text-[#757575]"
              placeholder="병원 이름을 입력하세요"
            />
            <button type="button" aria-label="검색">
              <svg viewBox="0 0 38 38" className="size-[38px]" fill="none" stroke="#234780">
                <circle cx="15.500" cy="15" r="12" strokeWidth="5" />
                <path d="M25 25L34 33.500" strokeWidth="6" strokeLinecap="round" />
              </svg>
            </button>
          </form>
        </section>
        <section className="h-[315px] w-full overflow-hidden">
          <CityMap />
        </section>
      </main>
    </div>
  );
}
